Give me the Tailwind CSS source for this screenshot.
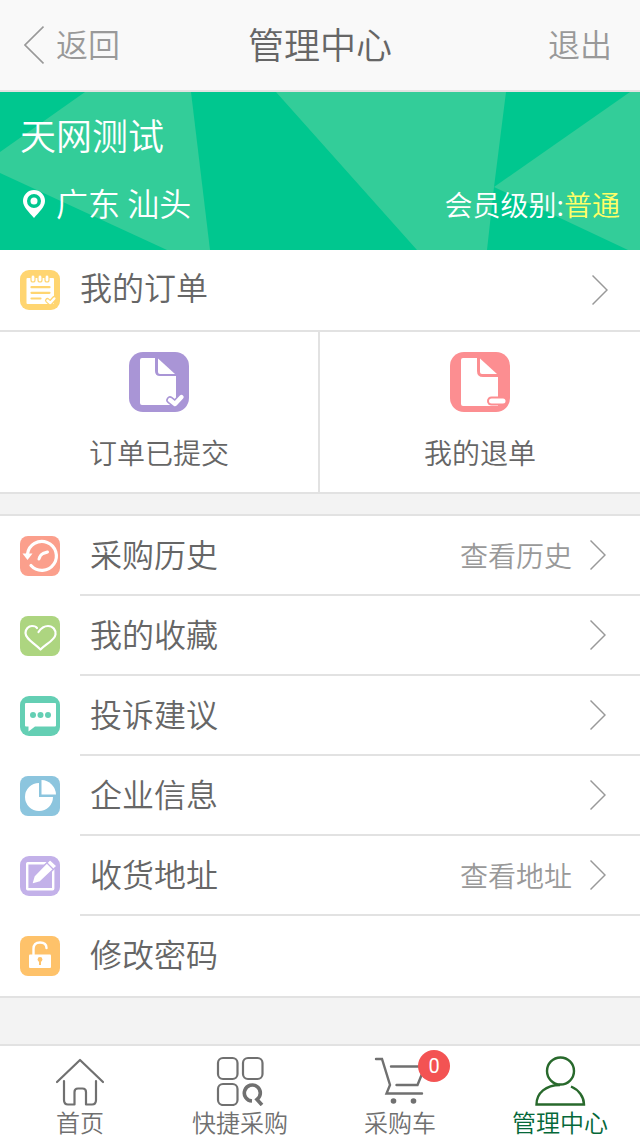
<!DOCTYPE html>
<html lang="zh-CN">
<head>
    <meta charset="UTF-8">
    <meta name="viewport" content="width=device-width, initial-scale=1.0">
    <title>管理中心</title>
    <script src="https://cdn.jsdelivr.net/npm/@tailwindcss/browser@4"></script>
</head>
<body class="bg-[#f3f3f3] font-['Noto_Sans_CJK_SC',sans-serif] font-[350] text-[#666]">
    <div class="min-h-screen flex flex-col">
        <!-- Header -->
        <header class="grid grid-cols-3 items-center h-23 px-6 bg-[#f9f9f9] border-b-2 border-[#e2e2e2] text-[32px] leading-10 text-[#999]">
            <a href="#" class="flex items-center gap-3">
                <svg class="w-5 h-10" viewBox="0 0 20 40" fill="none" stroke="#999" stroke-width="1.6"><path d="M19.500 1.500L1 20l18.500 18.500"/></svg>
                <span class="pb-1">返回</span>
            </a>
            <h1 class="pb-1 text-center text-4xl text-[#666]">管理中心</h1>
            <a href="#" class="pb-1 pr-1 text-right">退出</a>
        </header>

        <!-- Profile banner -->
        <section class="relative bg-[#00c78f] text-white px-5 pt-4.5 pb-6.5">
            <svg class="absolute inset-0 w-full h-full" viewBox="0 0 640 158" preserveAspectRatio="none" fill="#33cd99">
                <path d="M85 0H191L210 158H167L0 81V60z"/>
                <path d="M276 0H506L494 95L487 158H417z"/>
                <path d="M630 0H640V158H628L494 95z"/>
            </svg>
            <div class="relative flex flex-col gap-6.5">
                <h2 class="text-4xl leading-12">天网测试</h2>
                <div class="flex items-center justify-between h-10">
                    <p class="flex items-center gap-2 text-[32px] leading-10">
                        <svg class="w-7 h-8" viewBox="0 0 28 32"><path fill="#fff" fill-rule="evenodd" d="M14 2a11 11 0 0 1 11 11c0 6-6 11-11 17C9 24 3 19 3 13A11 11 0 0 1 14 2zm0 4a7 7 0 1 0 0 14a7 7 0 0 0 0-14z"/><circle cx="14" cy="13" r="3.500" fill="#fff"/></svg>
                        <span class="pb-1">广东 汕头</span>
                    </p>
                    <p class="text-[28px] leading-10">会员级别:<span class="text-[#ffff66]">普通</span></p>
                </div>
            </div>
        </section>

        <!-- Orders -->
        <section class="bg-white border-b-2 border-[#e2e2e2]">
            <a href="#" class="flex items-center gap-5 h-[82px] pl-5 pr-8 border-b-2 border-[#e2e2e2] text-[32px] leading-10">
                <svg class="w-10 h-10" viewBox="0 0 40 40">
                    <rect width="40" height="40" rx="9" fill="#ffd571"/>
                    <path d="M7.500 8H33q1 0 1 1V33q0 1-1 1H7.500q-1 0-1-1V9q0-1 1-1z" fill="#fff"/>
                    <g fill="#fff" stroke="#ffd571" stroke-width="1.200"><rect x="11" y="5" width="4" height="7" rx="2"/><rect x="18" y="5" width="4" height="7" rx="2"/><rect x="25" y="5" width="4" height="7" rx="2"/></g>
                    <path d="M11.500 17.200h18M11.500 22.800h18M11.500 28.500h9" stroke="#ffd571" stroke-width="2.200" stroke-linecap="round"/>
                    <path d="M27.500 30.500l2.800 2.500 4-4.500" fill="none" stroke="#ffd571" stroke-width="5" stroke-linecap="round" stroke-linejoin="round"/>
                    <path d="M27.500 30.500l2.800 2.500 4-4.500" fill="none" stroke="#fff" stroke-width="2.500" stroke-linecap="round" stroke-linejoin="round"/>
                </svg>
                <span class="flex-1 pb-2">我的订单</span>
                <svg class="w-4 h-8" viewBox="0 0 16 32" fill="none" stroke="#999" stroke-width="1.500"><path d="M.5 1.500L15 16L.5 30.500"/></svg>
            </a>
            <div class="grid grid-cols-2 text-[28px] leading-10">
                <a href="#" class="flex flex-col items-center gap-5 py-5 border-r-2 border-[#e2e2e2]">
                    <svg class="w-15 h-15" viewBox="0 0 60 60">
                        <rect width="60" height="60" rx="14" fill="#a995d6"/>
                        <path d="M13 6H26V19q0 5 5 5H47V53H13q-2 0-2-2V8q0-2 2-2z" fill="#fff"/>
                        <path d="M29 6.500L46 22H31q-2 0-2-2z" fill="#fff"/>
                        <path d="M41 48l5 4 6.500-7" fill="none" stroke="#a995d6" stroke-width="7.500" stroke-linecap="round" stroke-linejoin="round"/>
                        <path d="M41 48l5 4 6.500-7" fill="none" stroke="#fff" stroke-width="4.400" stroke-linecap="round" stroke-linejoin="round"/>
                    </svg>
                    订单已提交
                </a>
                <a href="#" class="flex flex-col items-center gap-5 py-5">
                    <svg class="w-15 h-15" viewBox="0 0 60 60">
                        <rect width="60" height="60" rx="14" fill="#fc8e91"/>
                        <path d="M13 6H27V19q0 6 6 6H48V54H13q-2 0-2-2V8q0-2 2-2z" fill="#fff"/>
                        <path d="M30 6.500L47 22H32q-2 0-2-2z" fill="#fff"/>
                        <path d="M41.500 49H53" stroke="#fc8e91" stroke-width="9" stroke-linecap="round"/>
                        <path d="M41.500 49H53" stroke="#fff" stroke-width="5" stroke-linecap="round"/>
                    </svg>
                    我的退单
                </a>
            </div>
        </section>

        <!-- Menu -->
        <nav class="mt-5 bg-white border-y-2 border-[#e2e2e2] text-[32px] leading-10">
            <a href="#" class="flex items-center pl-5">
                <svg class="w-10 h-10" viewBox="0 0 40 40" fill="none" stroke="#fff" stroke-linecap="round">
                    <rect width="40" height="40" rx="8" fill="#fb9f8c" stroke="none"/>
                    <path d="M7.500 18A14.500 14.500 0 1 1 11 29.500" stroke-width="3.200"/>
                    <path d="M2.500 17.500h10L7.500 24z" fill="#fff" stroke="none"/>
                    <path d="M27.500 16l-4.500 1.500q-3 1.500-4 5.500" stroke-width="3"/>
                </svg>
                <span class="ml-5 flex-1 flex items-center h-20 border-b-2 border-[#e2e2e2] pl-2.5 pr-8.5">
                    <span class="flex-1 pb-1">采购历史</span>
                    <span class="text-[28px] text-[#999] mr-4.5">查看历史</span>
                    <svg class="w-4 h-8" viewBox="0 0 16 32" fill="none" stroke="#999" stroke-width="1.500"><path d="M.5 1.500L15 16L.5 30.500"/></svg>
                </span>
            </a>
            <a href="#" class="flex items-center pl-5">
                <svg class="w-10 h-10" viewBox="0 0 40 40">
                    <rect width="40" height="40" rx="8" fill="#add580"/>
                    <path d="M18.500 16q4-6 9.500-6c5 0 8 4 7.500 8.500C35 24 26 28 20.500 33.500C14 27 5.500 23 5.500 17c0-4 3-7 6.500-7q4 0 5 2" fill="none" stroke="#fff" stroke-width="2.200" stroke-linecap="round" stroke-linejoin="round"/>
                </svg>
                <span class="ml-5 flex-1 flex items-center h-20 border-b-2 border-[#e2e2e2] pl-2.5 pr-8.5">
                    <span class="flex-1 pb-1">我的收藏</span>
                    <svg class="w-4 h-8" viewBox="0 0 16 32" fill="none" stroke="#999" stroke-width="1.500"><path d="M.5 1.500L15 16L.5 30.500"/></svg>
                </span>
            </a>
            <a href="#" class="flex items-center pl-5">
                <svg class="w-10 h-10" viewBox="0 0 40 40">
                    <rect width="40" height="40" rx="9" fill="#64cfb4"/>
                    <path d="M6 7H35q1 0 1 1V29.500q0 1-1 1H15L8.500 35.500V30.500H6q-1 0-1-1V8q0-1 1-1z" fill="#fff"/>
                    <g fill="#64cfb4"><circle cx="13" cy="19" r="3"/><circle cx="20.500" cy="19" r="3"/><circle cx="28" cy="19" r="3"/></g>
                </svg>
                <span class="ml-5 flex-1 flex items-center h-20 border-b-2 border-[#e2e2e2] pl-2.5 pr-8.5">
                    <span class="flex-1 pb-1">投诉建议</span>
                    <svg class="w-4 h-8" viewBox="0 0 16 32" fill="none" stroke="#999" stroke-width="1.500"><path d="M.5 1.500L15 16L.5 30.500"/></svg>
                </span>
            </a>
            <a href="#" class="flex items-center pl-5">
                <svg class="w-10 h-10" viewBox="0 0 40 40" fill="#fff">
                    <rect width="40" height="40" rx="8" fill="#8cc5de"/>
                    <path d="M19 7V21H33A14 14 0 1 1 19 7z"/>
                    <path d="M21.500 4A15 15 0 0 1 36 18.500H21.500z"/>
                </svg>
                <span class="ml-5 flex-1 flex items-center h-20 border-b-2 border-[#e2e2e2] pl-2.5 pr-8.5">
                    <span class="flex-1 pb-1">企业信息</span>
                    <svg class="w-4 h-8" viewBox="0 0 16 32" fill="none" stroke="#999" stroke-width="1.500"><path d="M.5 1.500L15 16L.5 30.500"/></svg>
                </span>
            </a>
            <a href="#" class="flex items-center pl-5">
                <svg class="w-10 h-10" viewBox="0 0 40 40">
                    <rect width="40" height="40" rx="9" fill="#c3b1e9"/>
                    <rect x="7.200" y="7.200" width="26" height="26" rx=".5" fill="none" stroke="#fff" stroke-width="2.400"/>
                    <path d="M11.500 28.500l2.500-8.500L30 3.500 37 10 20 26z" fill="#fff" stroke="#c3b1e9" stroke-width="1.500"/>
                    <path d="M27 7l6 6" stroke="#c3b1e9" stroke-width="1.200"/>
                </svg>
                <span class="ml-5 flex-1 flex items-center h-20 border-b-2 border-[#e2e2e2] pl-2.5 pr-8.5">
                    <span class="flex-1 pb-1">收货地址</span>
                    <span class="text-[28px] text-[#999] mr-4.5">查看地址</span>
                    <svg class="w-4 h-8" viewBox="0 0 16 32" fill="none" stroke="#999" stroke-width="1.500"><path d="M.5 1.500L15 16L.5 30.500"/></svg>
                </span>
            </a>
            <a href="#" class="flex items-center pl-5">
                <svg class="w-10 h-10" viewBox="0 0 40 40">
                    <rect width="40" height="40" rx="8" fill="#fec26a"/>
                    <rect x="9" y="18.500" width="22" height="13.500" rx="1" fill="#fff"/>
                    <path d="M13.500 19V13q0-6.500 6.500-6.500T26.500 12" fill="none" stroke="#fff" stroke-width="2.400" stroke-linecap="round"/>
                    <circle cx="20" cy="23.500" r="2.400" fill="#fec26a"/><path d="M20 24v5" stroke="#fec26a" stroke-width="2"/>
                </svg>
                <span class="ml-5 flex-1 flex items-center h-20 pl-2.5 pb-1.5">修改密码</span>
            </a>
        </nav>

        <!-- Tab bar -->
        <footer class="mt-auto grid grid-cols-4 pt-2 bg-white border-t-2 border-[#e2e2e2] text-2xl leading-7 text-[#707070]">
            <a href="#" class="flex flex-col items-center gap-0.5">
                <svg class="w-13 h-13" viewBox="0 0 52 52" fill="none" stroke="#707070" stroke-width="2.200" stroke-linecap="round" stroke-linejoin="round">
                    <path d="M3 28L26 6l23 22M10 27V46q0 4.500 4 4.500h6.500V38q0-3.500 3.500-3.500h4.500q3.500 0 3.500 3.500V50.500H38q4 0 4-4.500V27"/>
                </svg>
                首页
            </a>
            <a href="#" class="flex flex-col items-center gap-0.5">
                <svg class="w-13 h-13" viewBox="0 0 52 52" fill="none" stroke="#707070" stroke-width="2.200">
                    <rect x="4" y="4" width="19.500" height="21" rx="5"/>
                    <rect x="29" y="4" width="19.500" height="21" rx="5"/>
                    <rect x="4" y="30" width="19.500" height="21" rx="5"/>
                    <path d="M38 47A8 8 0 1 1 43 45.500L48 51" stroke-width="3.600"/>
                </svg>
                快捷采购
            </a>
            <a href="#" class="flex flex-col items-center gap-0.5">
                <span class="relative">
                    <svg class="w-13 h-13" viewBox="0 0 52 52" fill="none" stroke="#707070" stroke-width="2.400" stroke-linecap="round">
                        <path d="M2 5h6L16 31 12.500 39.500H48M17 12.500H51L43.500 31H22.500"/>
                        <g fill="#707070" stroke="none"><circle cx="19.500" cy="47" r="2.800"/><circle cx="39.500" cy="47" r="2.800"/></g>
                    </svg>
                    <span class="absolute -top-1 -right-6 w-8 h-8 rounded-full bg-[#f35353] text-white text-xl leading-8 text-center font-['Roboto',sans-serif] font-normal">0</span>
                </span>
                采购车
            </a>
            <a href="#" class="flex flex-col items-center gap-0.5 text-[#056839]" aria-current="page">
                <svg class="w-13 h-13" viewBox="0 0 52 52" fill="none" stroke="#28692c" stroke-width="2.400">
                    <circle cx="26.500" cy="17" r="13.500"/>
                    <path d="M26 31C12 31 2.500 39 2.500 50.500H50C50 43 45 36 37 32.500"/>
                </svg>
                管理中心
            </a>
        </footer>
    </div>
</body>
</html>
